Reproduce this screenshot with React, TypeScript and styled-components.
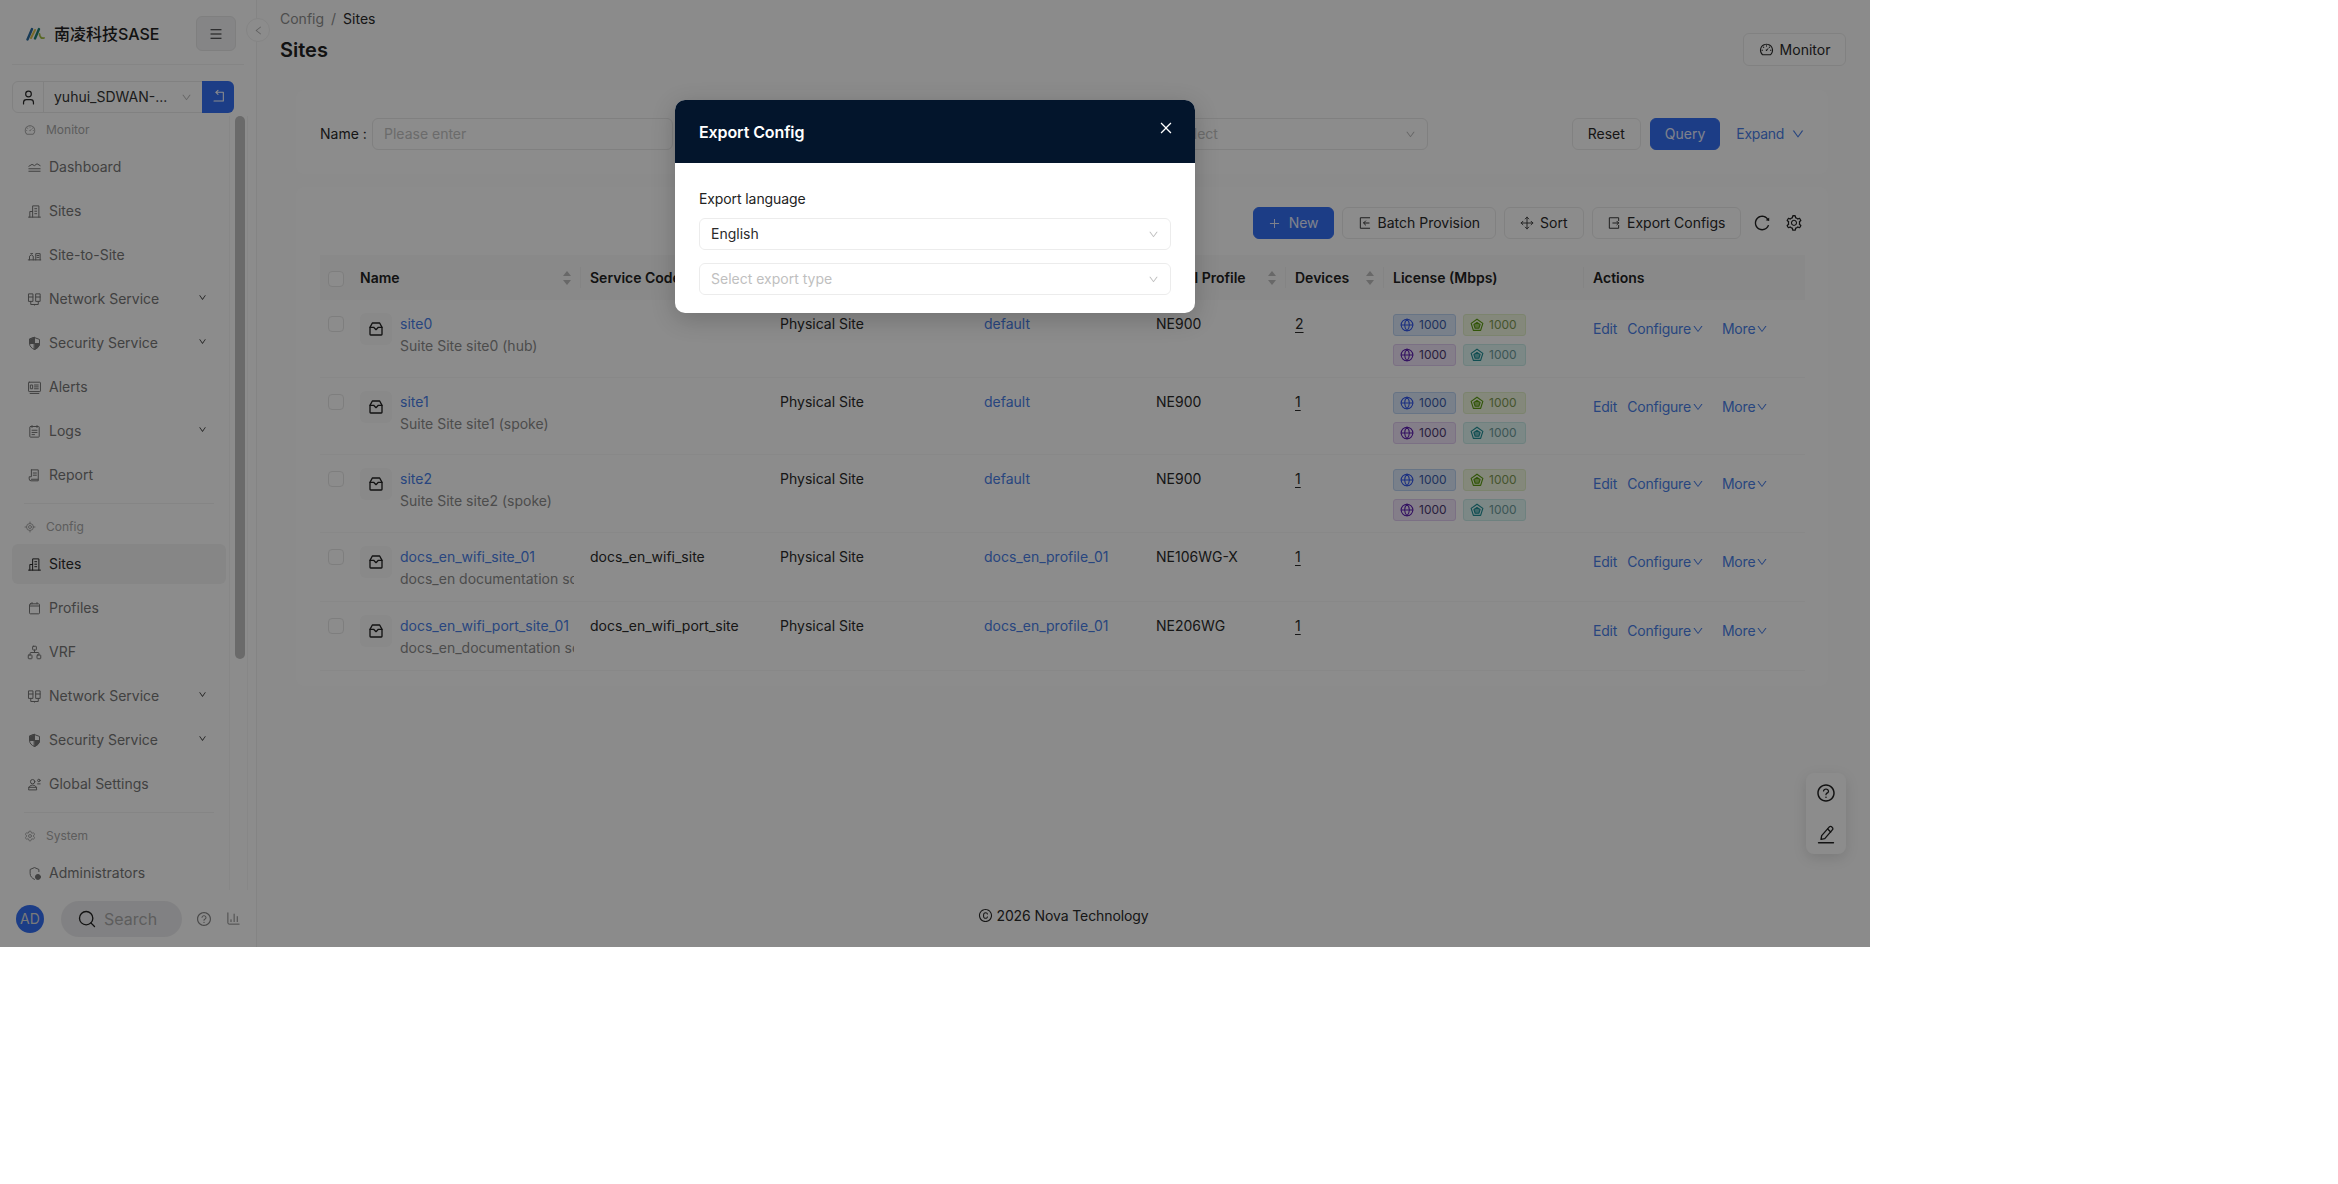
import * as React from 'react';
import styled, { createGlobalStyle } from 'styled-components';
import { ChartColumn, Globe, LocateFixed, Move, Network, Search, Settings, User } from 'lucide-react';
import {
	AiOutlineCopyright,
	AiOutlineDashboard,
	AiOutlineDown,
	AiOutlineLeft,
	AiOutlineMenu,
	AiOutlinePlus,
	AiOutlineQuestionCircle,
	AiOutlineReload,
	AiOutlineSetting,
	AiOutlineClose,
} from 'react-icons/ai';

const GlobalStyle = createGlobalStyle`
	html, body {
		margin: 0;
		padding: 0;
		background: #fff;
	}
	body {
		font-family: Inter, "Noto Sans CJK SC", sans-serif;
		font-size: 14px;
		line-height: 22px;
		color: #2a2a2a;
	}
	* {
		box-sizing: border-box;
	}
`;

const PRIMARY = '#3470f5';
const LINK = '#4a7fe8';

const Frame = styled.div`
	position: relative;
	width: 1870px;
	height: 947px;
	overflow: hidden;
	display: flex;
	background: #fdfdfd;
`;

/* sidebar */
const Sidebar = styled.aside`
	position: relative;
	width: 257px;
	flex: none;
	display: flex;
	flex-direction: column;
	background: #fff;
	border-right: 1px solid #f1f1f1;
`;

const Brand = styled.div`
	height: 65px;
	margin: 0 12px;
	padding: 3px 8px 0 14px;
	display: flex;
	align-items: center;
	border-bottom: 1px solid #f3f3f3;
`;

const BrandName = styled.span`
	margin-left: 9px;
	font-size: 16px;
	font-weight: 500;
	color: #222;
	white-space: nowrap;
`;

const MenuToggle = styled.button`
	margin-left: auto;
	width: 40px;
	height: 35px;
	display: flex;
	align-items: center;
	justify-content: center;
	background: #f2f3f5;
	border: 1px solid #e8e8e8;
	border-radius: 6px;
	color: #222;
	font-size: 14px;
	padding: 0;
`;

const CollapseDot = styled.div`
	position: absolute;
	left: 246px;
	top: 18px;
	width: 24px;
	height: 24px;
	border-radius: 50%;
	background: #fff;
	border: 1px solid #f2f2f2;
	display: flex;
	align-items: center;
	justify-content: center;
	color: #b0b0b0;
	font-size: 11px;
`;

const AccountBar = styled.div`
	margin: 16px 0 3px 12px;
	width: 222px;
	height: 32px;
	flex: none;
	display: flex;
	border: 1px solid #ececec;
	border-radius: 6px;
`;

const AccountIcon = styled.div`
	width: 31px;
	display: flex;
	align-items: center;
	justify-content: center;
	border-right: 1px solid #ececec;
	color: #2a2a2a;
`;

const AccountSelect = styled.div`
	flex: 1;
	padding: 0 10px;
	display: flex;
	align-items: center;
	justify-content: space-between;
	color: #333;
`;

const AccountBack = styled.div`
	width: 32px;
	margin: -1px -1px -1px 0;
	border-radius: 0 6px 6px 0;
	display: flex;
	align-items: center;
	justify-content: center;
	background: ${PRIMARY};
	color: #fff;
`;

const MenuArea = styled.div`
	flex: 1;
	min-height: 0;
	display: flex;
	overflow: hidden;
`;

const MenuList = styled.nav`
	width: 226px;
	flex: none;
	padding-left: 12px;
`;

const ScrollTrack = styled.div`
	width: 19px;
	margin-left: 3px;
	padding: 0 4px 0 5px;
	border-left: 1px solid #f6f6f6;
	border-right: 1px solid #f6f6f6;
`;

const ScrollThumb = styled.div`
	width: 10px;
	height: 543px;
	background: #c2c2c2;
	border-radius: 5px;
`;

const GroupTitle = styled.div`
	height: 28px;
	margin-bottom: 3px;
	padding-left: 12px;
	display: flex;
	align-items: center;
	gap: 10px;
	font-size: 12px;
	color: #a9a9a9;
`;

const MenuDivider = styled.div`
	height: 1px;
	margin: 8px 12px 9px 12px;
	background: #f3f3f3;
`;

const MenuItem = styled.div<{ $active?: boolean }>`
	height: 40px;
	margin-bottom: 4px;
	padding: 0 19px 0 15px;
	display: flex;
	align-items: center;
	gap: 7px;
	border-radius: 6px;
	background: ${p => (p.$active ? '#f4f4f4' : 'transparent')};
	color: ${p => (p.$active ? '#2a2a2a' : '#777')};
	svg {
		flex: none;
	}
`;

const MenuCaret = styled.span`
	margin-left: auto;
	margin-top: -4px;
	display: flex;
	font-size: 9px;
	color: #333;
`;

const SideFooter = styled.div`
	height: 57px;
	flex: none;
	display: flex;
	align-items: center;
	padding-left: 16px;
`;

const Avatar = styled.div`
	width: 28px;
	height: 28px;
	border-radius: 50%;
	background: ${PRIMARY};
	color: #ddd;
	font-size: 14px;
	display: flex;
	align-items: center;
	justify-content: center;
`;

const SearchPill = styled.div`
	margin-left: 17px;
	width: 121px;
	height: 36px;
	padding-left: 16px;
	border-radius: 18px;
	background: #ececee;
	display: flex;
	align-items: center;
	gap: 7px;
	font-size: 16px;
	color: #aaa;
	svg {
		color: #222;
	}
`;

const FootIcon = styled.span<{ $left: number }>`
	margin-left: ${p => p.$left}px;
	display: flex;
	color: #888;
`;

/* main area */
const Main = styled.main`
	flex: 1;
	min-width: 0;
	display: flex;
	flex-direction: column;
`;

const PageHead = styled.header`
	height: 90px;
	flex: none;
	padding: 8px 24px 0 23px;
	display: flex;
	justify-content: space-between;
`;

const Crumbs = styled.div`
	display: flex;
	gap: 7px;
	color: #8d8d8d;
`;

const CrumbNow = styled.span`
	color: #2a2a2a;
`;

const PageTitle = styled.h1`
	margin: 6px 0 0;
	font-size: 20px;
	line-height: 28px;
	font-weight: 600;
	color: #222;
`;

const Button = styled.button<{ $primary?: boolean }>`
	height: 32px;
	padding: 0 15px;
	display: inline-flex;
	align-items: center;
	justify-content: center;
	gap: 6px;
	flex: none;
	font: inherit;
	color: ${p => (p.$primary ? '#e6ecff' : '#2a2a2a')};
	background: ${p => (p.$primary ? PRIMARY : '#fff')};
	border: 1px solid ${p => (p.$primary ? PRIMARY : '#ececec')};
	border-radius: 6px;
	white-space: nowrap;
`;

const MonitorButton = styled(Button)`
	margin-top: 25px;
	width: 103px;
	height: 33px;
	padding: 0;
`;

const QueryButton = styled(Button)`
	padding: 0 14px;
`;

const FilterPanel = styled.section`
	height: 84px;
	flex: none;
	margin: 0 42px 13px 39px;
	padding: 28px 0 0 24px;
	display: flex;
	align-items: flex-start;
	background: #fff;
	border-radius: 8px;
`;

const FilterGrid = styled.div`
	width: 1108px;
	display: grid;
	grid-template-columns: repeat(3, 1fr);
	gap: 24px;
`;

const FilterField = styled.label<{ $labelWidth: number }>`
	display: grid;
	grid-template-columns: ${p => p.$labelWidth}px 1fr;
	align-items: center;
	white-space: nowrap;
`;

const FieldBox = styled.div`
	height: 32px;
	padding: 0 11px;
	display: flex;
	align-items: center;
	justify-content: space-between;
	border: 1px solid #e9e9e9;
	border-radius: 6px;
	color: #c4c4c4;
	svg {
		font-size: 11px;
		color: #bbb;
	}
`;

const FilterActions = styled.div`
	margin-left: auto;
	padding-right: 23px;
	display: flex;
	gap: 9px;
`;

const ExpandLink = styled.span`
	margin-left: 7px;
	height: 32px;
	display: flex;
	align-items: center;
	gap: 7px;
	letter-spacing: -0.3px;
	color: ${LINK};
	svg {
		font-size: 14px;
	}
`;

const TableCard = styled.section`
	margin: 0 42px 0 39px;
	padding: 20px 23px 15px 24px;
	background: #fff;
	border-radius: 8px;
`;

const Toolbar = styled.div`
	display: flex;
	justify-content: flex-end;
	align-items: center;
	gap: 8px;
	height: 32px;
	padding-right: 2px;
	margin-bottom: 16px;
`;

const NewButton = styled(Button)`
	padding: 0 14px;
	gap: 8px;
`;

const ExportButton = styled(Button)`
	padding: 0 14.5px;
`;

const ToolIcon = styled.span<{ $left: number }>`
	margin-left: ${p => p.$left}px;
	display: flex;
	font-size: 18px;
	color: #222;
`;

const Table = styled.table`
	width: 1485px;
	table-layout: fixed;
	border-collapse: separate;
	border-spacing: 0;
`;

const HeadCell = styled.th`
	position: relative;
	height: 45px;
	padding: 0 10px 0 8px;
	background: #f9f9f9;
	font-weight: 600;
	text-align: left;
	color: #222;
	white-space: nowrap;

	&:not(:first-child):not(:last-child)::after {
		content: '';
		position: absolute;
		right: 1px;
		top: 12px;
		width: 1px;
		height: 21px;
		background: #f1f1f1;
	}
`;

const HeadInner = styled.div`
	display: flex;
	align-items: center;
	justify-content: space-between;
`;

const Cell = styled.td<{ $pad?: number }>`
	padding: ${p => p.$pad ?? 13}px 8px 0;
	vertical-align: top;
	border-bottom: 1px solid #f7f7f7;
	color: #2a2a2a;
`;

const Check = styled.div`
	width: 16px;
	height: 16px;
	margin-top: 3px;
	background: #fff;
	border: 1px solid #e6e6e6;
	border-radius: 4px;
`;

const NameCell = styled.div`
	display: flex;
	gap: 8px;
	padding-bottom: 11px;
`;

const SiteIcon = styled.div`
	width: 32px;
	height: 32px;
	flex: none;
	display: flex;
	align-items: center;
	justify-content: center;
	border-radius: 6px;
	background: #f9f9f9;
	color: #222;
`;

const NameBlock = styled.div`
	min-width: 0;
	flex: 1;
	overflow: hidden;
	white-space: nowrap;
`;

const Link = styled.a`
	color: ${LINK};
	white-space: nowrap;
`;

const SubText = styled.div`
	color: #8b8b8b;
`;

const Count = styled.span`
	text-decoration: underline;
	text-underline-offset: 3px;
`;

const TagGrid = styled.div<{ $bottom: number }>`
	margin: 1px 0 ${p => p.$bottom}px;
	display: grid;
	grid-template-columns: 63px 63px;
	column-gap: 7px;
	row-gap: 8px;
`;

const tagColors = {
	blue: { bg: '#dde9fb', border: '#bcd3f3', icon: '#2f54eb', text: '#3a5ba8' },
	lime: { bg: '#f0f8e0', border: '#e2f0c8', icon: '#5b9c10', text: '#7f9a55' },
	purple: { bg: '#f1e6fa', border: '#e0ccf0', icon: '#5b1db0', text: '#4a3a70' },
	cyan: { bg: '#e2f7f4', border: '#c9ece8', icon: '#1f8f96', text: '#6f9c9a' },
};

type TagKind = keyof typeof tagColors;

const Tag = styled.span<{ $kind: TagKind }>`
	height: 22px;
	display: flex;
	align-items: center;
	gap: 5px;
	padding-left: 6px;
	font-size: 12px;
	border-radius: 3px;
	background: ${p => tagColors[p.$kind].bg};
	border: 1px solid ${p => tagColors[p.$kind].border};
	color: ${p => tagColors[p.$kind].text};
	svg {
		color: ${p => tagColors[p.$kind].icon};
		flex: none;
	}
`;

const ActionRow = styled.div`
	display: flex;
	align-items: center;
	letter-spacing: -0.2px;
	color: ${LINK};
	svg {
		font-size: 12px;
		margin-left: 1px;
	}
`;

const ActionGap = styled.span<{ $w: number }>`
	width: ${p => p.$w}px;
`;

const PageFooter = styled.footer`
	margin-top: auto;
	height: 42px;
	display: flex;
	align-items: flex-start;
	justify-content: center;
	gap: 3px;
	letter-spacing: -0.1px;
	color: #2a2a2a;
	svg {
		font-size: 15px;
		margin-top: 3px;
	}
`;

const FloatTools = styled.div`
	position: absolute;
	left: 1806px;
	top: 773px;
	width: 40px;
	height: 81px;
	display: flex;
	flex-direction: column;
	align-items: center;
	justify-content: space-between;
	padding: 10px 0 10px;
	background: #fff;
	border-radius: 8px;
	box-shadow: 0 4px 14px rgba(0, 0, 0, 0.12);
	color: #222;
	font-size: 20px;
`;

/* dialog */
const Mask = styled.div`
	position: absolute;
	inset: 0;
	background: rgba(0, 0, 0, 0.45);
`;

const Dialog = styled.div`
	position: absolute;
	left: 675px;
	top: 100px;
	width: 520px;
	height: 213px;
	border-radius: 10px;
	overflow: hidden;
	background: #fff;
	box-shadow: 0 6px 24px rgba(0, 0, 0, 0.2);
`;

const DialogHead = styled.div`
	height: 63px;
	padding: 0 24px;
	display: flex;
	align-items: center;
	background: #03152c;
	color: #fff;
	font-size: 16px;
	font-weight: 600;
	letter-spacing: -0.1px;
`;

const DialogClose = styled.span`
	position: absolute;
	right: 21px;
	top: 20px;
	display: flex;
	font-size: 16px;
	color: #fff;
`;

const DialogBody = styled.div`
	padding: 24px;
	display: flex;
	flex-direction: column;
`;

const DialogLabel = styled.div`
	margin-bottom: 8px;
	line-height: 23px;
	color: #222;
	letter-spacing: -0.1px;
`;

const DialogSelect = styled.div<{ $empty?: boolean }>`
	height: 32px;
	margin-bottom: 13px;
	padding: 0 11px;
	display: flex;
	align-items: center;
	justify-content: space-between;
	border: 1px solid #ececec;
	border-radius: 6px;
	color: ${p => (p.$empty ? '#bfbfbf' : '#2a2a2a')};
	svg {
		font-size: 11px;
		color: #bfbfbf;
	}
`;

/* hand drawn icons */
const Line: React.FC<{ size?: number; children: React.ReactNode }> = ({ size = 15, children }) => (
	<svg width={size} height={size} viewBox="0 0 24 24" fill="none" stroke="currentColor" strokeWidth={1.6} strokeLinecap="round" strokeLinejoin="round">
		{children}
	</svg>
);

const Logo = () => (
	<svg width="19" height="14" viewBox="0 0 19 14" fill="none" strokeLinecap="round">
		<path d="M1.5 12.5 L6 2" stroke="#2a6a9e" strokeWidth="2.4" />
		<path d="M5 11 L9 3" stroke="#d9c24a" strokeWidth="2" />
		<path d="M9 11.5 L13 2" stroke="#1e7f74" strokeWidth="2.4" />
		<path d="M13.5 7 Q14 12 18 11" stroke="#a3bd45" strokeWidth="1.8" />
	</svg>
);

const DashIcon = () => (
	<Line>
		<path d="M3 10l5-3 4 2 4-3 5 3" />
		<path d="M3 14h18M3 18h18" />
	</Line>
);

const BuildingIcon = () => (
	<Line>
		<path d="M2.5 21h19" />
		<path d="M9 21V3h10v18" />
		<path d="M9 12H4.5v9" />
		<path d="M12.5 7.5h3M12.5 11.5h3M12.5 15.5h3" />
	</Line>
);

const PairIcon = () => (
	<Line>
		<path d="M2 19h20" />
		<path d="M4 19v-6l3-2 3 2v6M14 19V9h7v10" />
		<path d="M6 9h3M16 12h3M16 15h3" />
	</Line>
);

const RackIcon = () => (
	<Line>
		<rect x="3" y="3" width="6.5" height="12" />
		<rect x="14.5" y="3" width="6.5" height="12" />
		<path d="M3 8h6.5M14.5 8h6.5M6 15v5h12v-5M12 20v1" />
	</Line>
);

const ShieldIcon = () => (
	<Line>
		<path d="M12 2.5l8 3v6c0 5-3.4 8.4-8 10-4.6-1.6-8-5-8-10v-6z" />
		<path d="M12 2.5v9.5H4v-6.5zM12 12h8c0 5-3.4 8-8 9.5z" fill="currentColor" />
	</Line>
);

const AlertIcon = () => (
	<Line>
		<rect x="2.5" y="3.5" width="19" height="15" rx="1" />
		<path d="M6 8h3v6H6zM12 8h6M12 11h6M12 14h6M5 21.5h14" />
	</Line>
);

const LogIcon = () => (
	<Line>
		<rect x="4.5" y="4" width="15" height="17" rx="1" />
		<path d="M8 2.5v3M16 2.5v3M8 10h8M8 13.5h8M8 17h4" />
	</Line>
);

const ReportIcon = () => (
	<Line>
		<path d="M7 3h11v15M7 3v11H3.5v3.5A3 3 0 006.5 20.5H18v-2.5H7" />
		<path d="M10 8h5M10 11.5h5" />
	</Line>
);

const ProfileIcon = () => (
	<Line>
		<rect x="4" y="4.5" width="16" height="16" rx="1.5" />
		<path d="M4 8h16M8 2.5v2M16 2.5v2" />
	</Line>
);

const GlobalIcon = () => (
	<Line>
		<circle cx="9" cy="7.5" r="3.5" />
		<path d="M2.5 20c0-5 3-7 6.5-7s6.5 2 6.5 7zM2.5 16.5h13" />
		<circle cx="19" cy="5.5" r="2" />
		<path d="M17 11h4" />
	</Line>
);

const AdminIcon = () => (
	<Line>
		<path d="M19 9V5.5l-7-3-7 3V12c0 4.5 3 7.6 7 9.5" />
		<circle cx="17.5" cy="17.5" r="4" fill="currentColor" />
	</Line>
);

const BackIcon = () => (
	<Line size={16}>
		<path d="M9 5h11v13H6" />
		<path d="M12 2L9 5l3 3" />
	</Line>
);

const ImportIcon = () => (
	<Line size={14}>
		<path d="M20 3H4v18h16" />
		<path d="M19 12H10M13 8.5L9.5 12l3.5 3.5" />
	</Line>
);

const ExportIcon = () => (
	<Line size={14}>
		<path d="M20 8V3H4v18h16v-5" />
		<path d="M10 12h10M17 9l3 3-3 3" />
	</Line>
);

const BoxIcon = () => (
	<svg width="16" height="16" viewBox="0 0 24 24" fill="none" stroke="currentColor" strokeWidth={2} strokeLinecap="round" strokeLinejoin="round">
		<path d="M3 9.5L6.5 3h11L21 9.5V20a1 1 0 01-1 1H4a1 1 0 01-1-1z" />
		<path d="M3 9.5h5.5l3.5 3.5 3.5-3.5H21" />
	</svg>
);

const GemIcon = () => (
	<svg width="14" height="14" viewBox="0 0 24 24" fill="none" stroke="currentColor" strokeWidth={2} strokeLinejoin="round">
		<path d="M12 2l10 7.2-3.8 12H5.8L2 9.2z" />
		<path d="M12 7.5l5.2 3.8-2 6.2H8.8l-2-6.2z" fill="currentColor" fillOpacity={0.55} />
	</svg>
);

const UnderlinePen = () => (
	<svg width="20" height="20" viewBox="0 0 24 24" fill="none" stroke="currentColor" strokeWidth={1.6} strokeLinecap="round" strokeLinejoin="round">
		<path d="M3 22.5h18" />
		<path d="M6 18.5l.8-4.5L16 3.5a2 2 0 013 0l.6.6a2 2 0 010 2.9L10.5 17.5z" />
		<path d="M14 6l3.6 3.6" />
	</svg>
);

const SortCarets = () => (
	<svg width="10" height="16" viewBox="0 0 10 16" fill="#bdbdbd">
		<path d="M5 1l4 5H1zM5 15l4-5H1z" />
	</svg>
);

const menuOne = [
	{ label: 'Dashboard', icon: <DashIcon /> },
	{ label: 'Sites', icon: <BuildingIcon /> },
	{ label: 'Site-to-Site', icon: <PairIcon /> },
	{ label: 'Network Service', icon: <RackIcon />, sub: true },
	{ label: 'Security Service', icon: <ShieldIcon />, sub: true },
	{ label: 'Alerts', icon: <AlertIcon /> },
	{ label: 'Logs', icon: <LogIcon />, sub: true },
	{ label: 'Report', icon: <ReportIcon /> },
];

const menuTwo = [
	{ label: 'Sites', icon: <BuildingIcon />, active: true },
	{ label: 'Profiles', icon: <ProfileIcon /> },
	{ label: 'VRF', icon: <Network size={15} strokeWidth={1.6} /> },
	{ label: 'Network Service', icon: <RackIcon />, sub: true },
	{ label: 'Security Service', icon: <ShieldIcon />, sub: true },
	{ label: 'Global Settings', icon: <GlobalIcon /> },
];

interface ISite {
	name: string;
	sub: string;
	code: string;
	profile: string;
	model: string;
	devices: number;
	tags: boolean;
	tagBottom?: number;
}

const sites: ISite[] = [
	{ name: 'site0', sub: 'Suite Site site0 (hub)', code: '', profile: 'default', model: 'NE900', devices: 2, tags: true, tagBottom: 11 },
	{ name: 'site1', sub: 'Suite Site site1 (spoke)', code: '', profile: 'default', model: 'NE900', devices: 1, tags: true, tagBottom: 10 },
	{ name: 'site2', sub: 'Suite Site site2 (spoke)', code: '', profile: 'default', model: 'NE900', devices: 1, tags: true, tagBottom: 11 },
	{ name: 'docs_en_wifi_site_01', sub: 'docs_en documentation scenario', code: 'docs_en_wifi_site', profile: 'docs_en_profile_01', model: 'NE106WG-X', devices: 1, tags: false },
	{ name: 'docs_en_wifi_port_site_01', sub: 'docs_en_documentation scenario', code: 'docs_en_wifi_port_site', profile: 'docs_en_profile_01', model: 'NE206WG', devices: 1, tags: false },
];

const columns = [
	{ width: 32 },
	{ width: 230, title: 'Name', sort: true },
	{ width: 190, title: 'Service Code' },
	{ width: 204, title: 'Type' },
	{ width: 172, title: 'Site Profile' },
	{ width: 139, title: 'Model Profile', sort: true },
	{ width: 98, title: 'Devices', sort: true },
	{ width: 200, title: 'License (Mbps)' },
	{ width: 220, title: 'Actions' },
];

const SideItem: React.FC<{ label: string; icon: React.ReactNode; sub?: boolean; active?: boolean }> = props => (
	<MenuItem $active={props.active}>
		{props.icon}
		<span>{props.label}</span>
		{props.sub && (
			<MenuCaret>
				<AiOutlineDown />
			</MenuCaret>
		)}
	</MenuItem>
);

const LicenseTag: React.FC<{ kind: TagKind; gem?: boolean }> = ({ kind, gem }) => (
	<Tag $kind={kind}>
		{gem ? <GemIcon /> : <Globe size={14} strokeWidth={1.8} />}
		1000
	</Tag>
);

export default function App() {
	return (
		<>
			<GlobalStyle />
			<Frame>
				<Sidebar>
					<Brand>
						<Logo />
						<BrandName>南凌科技SASE</BrandName>
						<MenuToggle>
							<AiOutlineMenu />
						</MenuToggle>
					</Brand>
					<CollapseDot>
						<AiOutlineLeft />
					</CollapseDot>
					<AccountBar>
						<AccountIcon>
							<User size={17} strokeWidth={1.7} />
						</AccountIcon>
						<AccountSelect>
							<span>yuhui_SDWAN-...</span>
							<AiOutlineDown size={11} color="#bbb" />
						</AccountSelect>
						<AccountBack>
							<BackIcon />
						</AccountBack>
					</AccountBar>
					<MenuArea>
						<MenuList>
							<GroupTitle>
								<AiOutlineDashboard size={12} />
								Monitor
							</GroupTitle>
							{menuOne.map(item => (
								<SideItem key={item.label} {...item} />
							))}
							<MenuDivider />
							<GroupTitle>
								<LocateFixed size={12} />
								Config
							</GroupTitle>
							{menuTwo.map(item => (
								<SideItem key={item.label} {...item} />
							))}
							<MenuDivider />
							<GroupTitle>
								<Settings size={12} />
								System
							</GroupTitle>
							<SideItem label="Administrators" icon={<AdminIcon />} />
						</MenuList>
						<ScrollTrack>
							<ScrollThumb />
						</ScrollTrack>
					</MenuArea>
					<SideFooter>
						<Avatar>AD</Avatar>
						<SearchPill>
							<Search size={20} strokeWidth={1.6} />
							Search
						</SearchPill>
						<FootIcon $left={14}>
							<AiOutlineQuestionCircle size={16} />
						</FootIcon>
						<FootIcon $left={14}>
							<ChartColumn size={15} strokeWidth={1.6} />
						</FootIcon>
					</SideFooter>
				</Sidebar>

				<Main>
					<PageHead>
						<div>
							<Crumbs>
								<span>Config</span>
								<span>/</span>
								<CrumbNow>Sites</CrumbNow>
							</Crumbs>
							<PageTitle>Sites</PageTitle>
						</div>
						<MonitorButton>
							<AiOutlineDashboard size={15} />
							Monitor
						</MonitorButton>
					</PageHead>

					<FilterPanel>
						<FilterGrid>
							<FilterField $labelWidth={52}>
								<span>Name :</span>
								<FieldBox>Please enter</FieldBox>
							</FilterField>
							<FilterField $labelWidth={90}>
								<span>Code :</span>
								<FieldBox>Please enter</FieldBox>
							</FilterField>
							<FilterField $labelWidth={90}>
								<span>Site Type :</span>
								<FieldBox>
									Select
									<AiOutlineDown />
								</FieldBox>
							</FilterField>
						</FilterGrid>
						<FilterActions>
							<Button>Reset</Button>
							<QueryButton $primary>Query</QueryButton>
							<ExpandLink>
								Expand
								<AiOutlineDown />
							</ExpandLink>
						</FilterActions>
					</FilterPanel>

					<TableCard>
						<Toolbar>
							<NewButton $primary>
								<AiOutlinePlus size={13} />
								New
							</NewButton>
							<Button>
								<ImportIcon />
								Batch Provision
							</Button>
							<Button>
								<Move size={14} strokeWidth={1.5} />
								Sort
							</Button>
							<ExportButton>
								<ExportIcon />
								Export Configs
							</ExportButton>
							<ToolIcon $left={4}>
								<AiOutlineReload />
							</ToolIcon>
							<ToolIcon $left={6}>
								<AiOutlineSetting />
							</ToolIcon>
						</Toolbar>
						<Table>
							<colgroup>
								{columns.map((c, i) => (
									<col key={i} width={c.width} />
								))}
							</colgroup>
							<thead>
								<tr>
									{columns.map((c, i) => (
										<HeadCell key={i}>
											{i === 0 ? (
												<Check />
											) : (
												<HeadInner>
													{c.title}
													{c.sort && <SortCarets />}
												</HeadInner>
											)}
										</HeadCell>
									))}
								</tr>
							</thead>
							<tbody>
								{sites.map(site => (
									<tr key={site.name}>
										<Cell>
											<Check />
										</Cell>
										<Cell>
											<NameCell>
												<SiteIcon>
													<BoxIcon />
												</SiteIcon>
												<NameBlock>
													<Link>{site.name}</Link>
													<SubText>{site.sub}</SubText>
												</NameBlock>
											</NameCell>
										</Cell>
										<Cell>{site.code}</Cell>
										<Cell>Physical Site</Cell>
										<Cell>
											<Link>{site.profile}</Link>
										</Cell>
										<Cell>{site.model}</Cell>
										<Cell>
											<Count>{site.devices}</Count>
										</Cell>
										<Cell>
											{site.tags && (
												<TagGrid $bottom={site.tagBottom ?? 11}>
													<LicenseTag kind="blue" />
													<LicenseTag kind="lime" gem />
													<LicenseTag kind="purple" />
													<LicenseTag kind="cyan" gem />
												</TagGrid>
											)}
										</Cell>
										<Cell $pad={18}>
											<ActionRow>
												Edit
												<ActionGap $w={10} />
												Configure
												<AiOutlineDown />
												<ActionGap $w={18} />
												More
												<AiOutlineDown />
											</ActionRow>
										</Cell>
									</tr>
								))}
							</tbody>
						</Table>
					</TableCard>

					<PageFooter>
						<AiOutlineCopyright />
						2026 Nova Technology
					</PageFooter>
				</Main>

				<FloatTools>
					<AiOutlineQuestionCircle />
					<UnderlinePen />
				</FloatTools>

				<Mask />
				<Dialog>
					<DialogHead>Export Config</DialogHead>
					<DialogClose>
						<AiOutlineClose />
					</DialogClose>
					<DialogBody>
						<DialogLabel>Export language</DialogLabel>
						<DialogSelect>
							English
							<AiOutlineDown />
						</DialogSelect>
						<DialogSelect $empty>
							Select export type
							<AiOutlineDown />
						</DialogSelect>
					</DialogBody>
				</Dialog>
			</Frame>
		</>
	);
}
